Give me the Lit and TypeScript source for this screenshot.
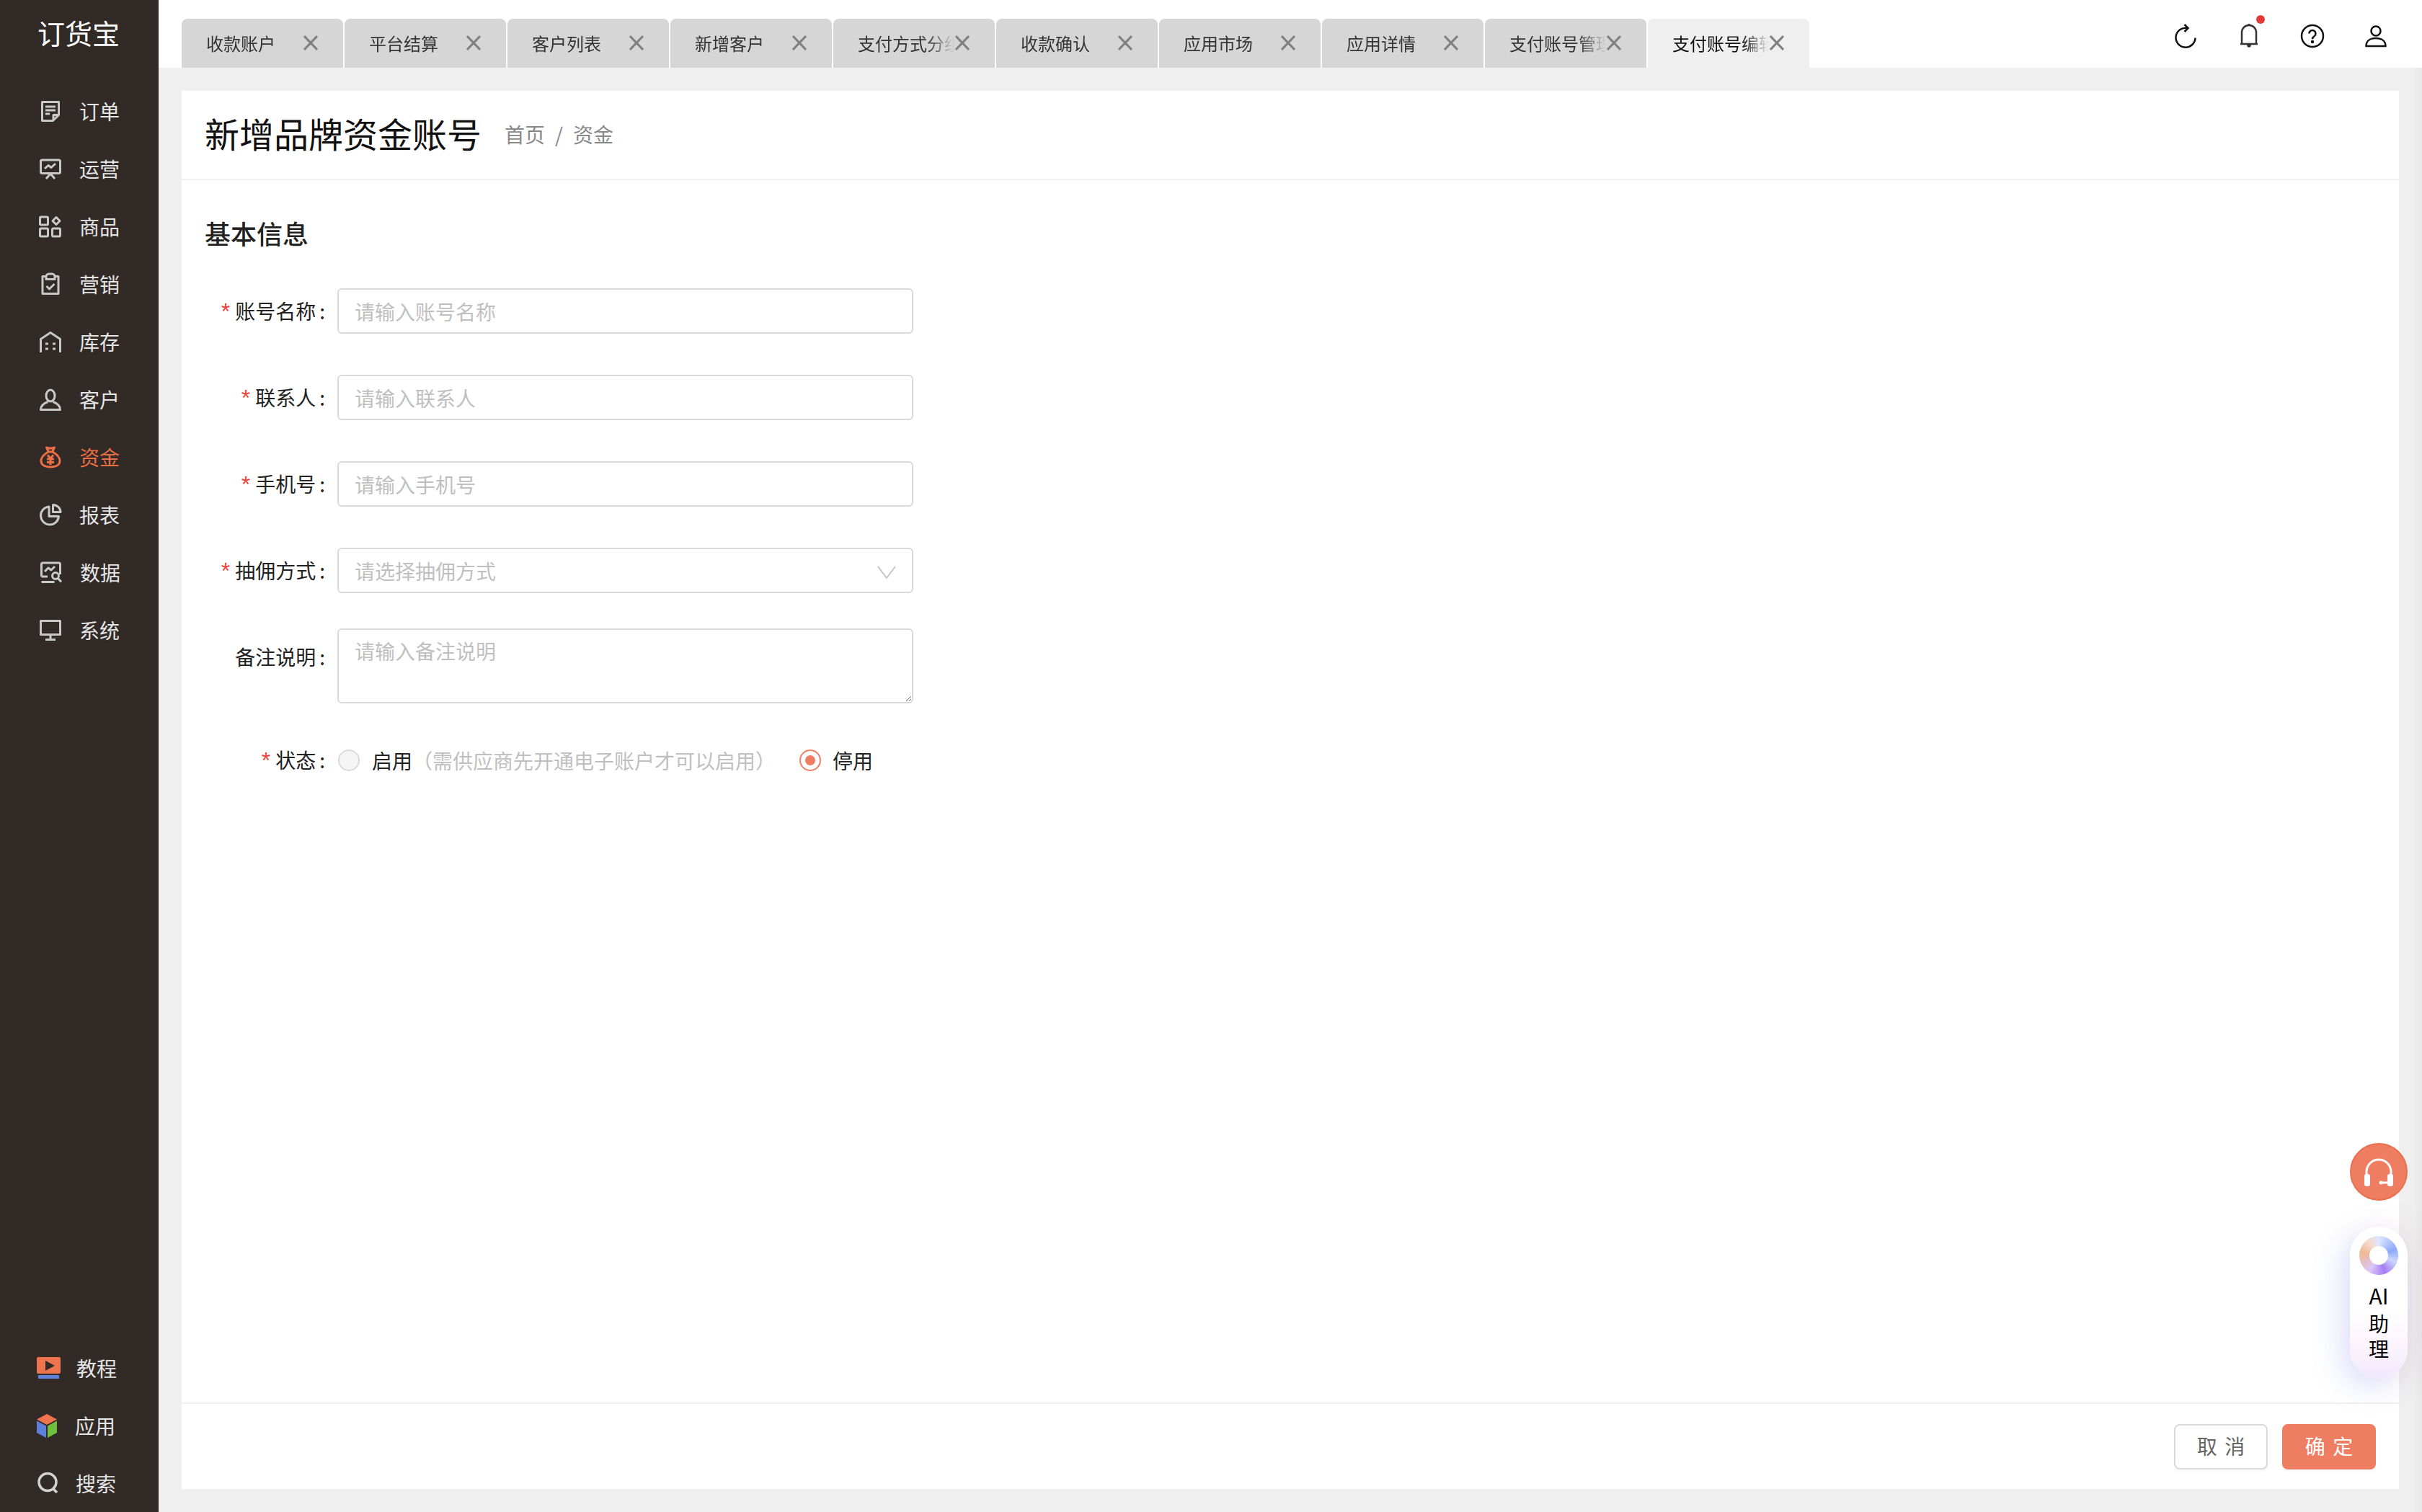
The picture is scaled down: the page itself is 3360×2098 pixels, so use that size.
import { LitElement, html, css, svg } from "lit";
import { customElement } from "lit/decorators.js";

const icons: Record<string, unknown> = {
  order: svg`<path d="M4.5 3.5h23v18l-8 8h-15z"/><path d="M27 21.5h-7v7"/><path d="M9 10h14M9 15h14M9 20h6"/>`,
  ops: svg`<rect x="2.5" y="4" width="27" height="18.5" rx="2"/><path d="M8 16l5-4.5 4 3 6-5.5"/><path d="M10 30l6-7 6 7"/>`,
  goods: svg`<rect x="1.5" y="3" width="11" height="11" rx="1.5"/><rect x="1.5" y="19" width="11" height="11" rx="1.5"/><rect x="18.5" y="19" width="11" height="11" rx="1.5"/><path d="M24 3.5l5 5-5 5-5-5z"/>`,
  market: svg`<path d="M10 5.5H5v24h22v-24h-5"/><path d="M10 9.5V6a4 4 0 0 1 4-4h4a4 4 0 0 1 4 4v3.5z"/><path d="M10.5 19l4 4 7-7"/>`,
  stock: svg`<path d="M2.5 31V12.5L16 3.5l13.5 9V31"/><path d="M9 19h4M19 19h4M9 26h4M19 26h4"/>`,
  customer: svg`<ellipse cx="16" cy="11" rx="6" ry="8"/><path d="M12.5 19.5C7 21.5 2.5 24 2.5 30.5h27c0-6.5-4.5-9-10-11"/>`,
  money: svg`<path d="M10.5 3c3 1 8 1 11 0l-3 6h-5z"/><path d="M13 9C7 12.5 3 17 3 21.5 3 27 8 30 16 30s13-3 13-8.5C29 17 25 12.5 19 9"/><path d="M12 13.5l4 4.5 4-4.5M11 19h10M11 23.5h10M16 18v9"/>`,
  report: svg`<path d="M14 5a12.5 12.5 0 1 0 13.5 13.5H14z"/><path d="M19.5 2.5V12.5h10.5C30 7 25 2.5 19.5 2.5z"/>`,
  data: svg`<path d="M3.5 22V5q0-2 2-2h22q2 0 2 2v14"/><path d="M3.5 22H12M3.5 29.5h18"/><path d="M8 15l5-5 4 3 5-5"/><circle cx="23" cy="21" r="4.5"/><path d="M26.5 24.5l4.5 5"/>`,
  system: svg`<rect x="2.5" y="3.5" width="27" height="19"/><path d="M16 23v6M9 29.5h14"/>`,
};

type NavItem = { label: string; icon: string; text: number; active?: boolean };

const NAV: NavItem[] = [
  { label: "订单", icon: "order", text: 110 },
  { label: "运营", icon: "ops", text: 110 },
  { label: "商品", icon: "goods", text: 110 },
  { label: "营销", icon: "market", text: 110 },
  { label: "库存", icon: "stock", text: 110 },
  { label: "客户", icon: "customer", text: 110 },
  { label: "资金", icon: "money", text: 110, active: true },
  { label: "报表", icon: "report", text: 110 },
  { label: "数据", icon: "data", text: 111 },
  { label: "系统", icon: "system", text: 110 },
];

const TABS = [
  "收款账户",
  "平台结算",
  "客户列表",
  "新增客户",
  "支付方式分组",
  "收款确认",
  "应用市场",
  "应用详情",
  "支付账号管理",
  "支付账号编辑",
];

@customElement("app-root")
export class AppRoot extends LitElement {
  static styles = css`
    :host {
      display: flex;
      height: 100vh;
      width: 100%;
      position: relative;
      overflow: hidden;
      background: #efefef;
      color: #222;
      font-family: "Noto Sans CJK SC", "Noto Sans", sans-serif;
      font-size: 28px;
    }
    .side {
      width: 220px;
      flex: none;
      background: #312a26;
      display: flex;
      flex-direction: column;
      color: #e6e6e6;
    }
    .logo {
      height: 114px;
      flex: none;
      padding: 20px 0 0 52px;
      box-sizing: border-box;
      font-size: 38px;
      line-height: 50px;
      color: #fff;
    }
    .nav-item {
      height: 80px;
      display: flex;
      align-items: center;
      line-height: 40px;
    }
    .nav-item.active {
      color: #ec6f45;
    }
    .nav-icon {
      width: 32px;
      height: 32px;
      flex: none;
      fill: none;
      stroke: #c9c9c9;
      stroke-width: 3;
      stroke-linejoin: round;
    }
    .active .nav-icon {
      stroke: #ec6f45;
    }
    .bottom {
      margin-top: auto;
    }
    .main {
      flex: 1;
      min-width: 0;
      display: flex;
      flex-direction: column;
    }
    .top {
      height: 94px;
      flex: none;
      background: #fff;
      display: flex;
      align-items: flex-end;
      padding: 0 44px 0 32px;
    }
    .tabs {
      display: flex;
      gap: 2px;
    }
    .tab {
      width: 224px;
      height: 68px;
      box-sizing: border-box;
      background: #d6d6d6;
      border-radius: 8px 8px 0 0;
      padding: 0 0 0 34px;
      display: flex;
      align-items: center;
      font-size: 24px;
      color: #333;
    }
    .tab.current {
      background: #efefef;
      color: #111;
    }
    .tab-text {
      width: 146px;
      white-space: nowrap;
      overflow: hidden;
      padding-bottom: 2px;
      -webkit-mask-image: linear-gradient(to right, #000 96px, transparent 134px);
      mask-image: linear-gradient(to right, #000 96px, transparent 134px);
    }
    .tab-x {
      width: 20px;
      height: 21px;
      margin-left: -11px;
      margin-bottom: 2px;
      flex: none;
      stroke: #808080;
      stroke-width: 3;
      fill: none;
    }
    .tools {
      margin-left: auto;
      align-self: flex-start;
      padding-top: 30px;
      display: flex;
      gap: 48px;
    }
    .tool {
      width: 40px;
      height: 40px;
      position: relative;
    }
    .tool svg {
      display: block;
      width: 40px;
      height: 40px;
      fill: none;
      stroke: #111;
      stroke-width: 2.5;
    }
    .tool .bell {
      stroke: #333;
    }
    .dot {
      position: absolute;
      top: -9px;
      right: -2px;
      width: 12px;
      height: 12px;
      border-radius: 50%;
      background: #e23c39;
    }
    .content {
      flex: 1;
      min-height: 0;
      padding: 32px;
      display: flex;
    }
    .card {
      flex: 1;
      background: #fff;
      display: flex;
      flex-direction: column;
    }
    .head {
      height: 124px;
      flex: none;
      box-sizing: border-box;
      border-bottom: 2px solid #f0f0f0;
      padding: 0 32px 6px;
      display: flex;
      align-items: center;
      gap: 32px;
    }
    .head h1 {
      margin: 0;
      font-size: 48px;
      font-weight: 400;
      color: #111;
      line-height: 60px;
    }
    .crumb {
      display: flex;
      gap: 14px;
      color: #888;
      padding-top: 4px;
    }
    .body {
      flex: 1;
      padding: 48px 32px 0;
    }
    h2 {
      margin: 0 0 52px;
      font-size: 36px;
      font-weight: 500;
      line-height: 50px;
      color: #222;
    }
    .row {
      display: flex;
      margin-bottom: 57px;
    }
    .row.tight {
      margin-bottom: 49px;
    }
    .row.textarea {
      margin-bottom: 47px;
    }
    .label {
      width: 167px;
      flex: none;
      margin-right: 17px;
      height: 63px;
      line-height: 63px;
      text-align: right;
      white-space: nowrap;
      color: #222;
    }
    .label.low {
      height: 79px;
      line-height: 79px;
    }
    .star {
      color: #e8453c;
      margin-right: 7px;
      font-size: 32px;
      line-height: 1;
      font-family: "Liberation Sans", sans-serif;
    }
    .colon {
      margin-left: 5px;
    }
    .field {
      width: 799px;
      height: 63px;
      box-sizing: border-box;
      border: 2px solid #d9d9d9;
      border-radius: 6px;
      padding: 0 22px;
      font: inherit;
      color: #222;
      background: #fff;
      outline: none;
      display: block;
    }
    .field::placeholder {
      color: #bfbfbf;
      opacity: 1;
    }
    textarea.field {
      height: 104px;
      padding: 10px 22px;
      line-height: 39px;
      resize: vertical;
    }
    .select {
      display: flex;
      align-items: center;
      justify-content: space-between;
      color: #bfbfbf;
      padding-right: 22px;
    }
    .select svg {
      width: 26px;
      height: 18px;
      fill: none;
      stroke: #c4c4c4;
      stroke-width: 2;
      margin-top: 4px;
    }
    .radios {
      display: flex;
      align-items: center;
      height: 63px;
    }
    .radio {
      width: 30px;
      height: 30px;
      box-sizing: border-box;
      border-radius: 50%;
      border: 2px solid #d9d9d9;
      background: #f5f5f5;
      margin: 0 17px 0 1px;
      display: flex;
      align-items: center;
      justify-content: center;
      flex: none;
    }
    .radio.on {
      border-color: #ef7d62;
      background: #fff;
      margin: 0 16px 0 33px;
    }
    .radio.on::after {
      content: "";
      width: 14px;
      height: 14px;
      border-radius: 50%;
      background: #ef7d62;
    }
    .hint {
      color: #bfbfbf;
    }
    .foot {
      height: 120px;
      flex: none;
      box-sizing: border-box;
      border-top: 2px solid #f0f0f0;
      padding: 0 32px;
      display: flex;
      justify-content: flex-end;
      align-items: center;
      gap: 20px;
    }
    .btn {
      width: 130px;
      height: 63px;
      box-sizing: border-box;
      border-radius: 8px;
      border: 2px solid #d9d9d9;
      background: #fff;
      color: #666;
      font: inherit;
      word-spacing: 4px;
      box-shadow: 0 4px 0 rgba(0, 0, 0, 0.02);
      padding: 0 0 2px;
    }
    .btn.primary {
      background: #ef7d62;
      border-color: #ef7d62;
      color: #fff;
    }
    .help {
      position: absolute;
      left: 3260px;
      top: 1586px;
      width: 80px;
      height: 80px;
      box-sizing: border-box;
      border-radius: 50%;
      background: #ef7d62;
      border: 2px solid #e7704f;
      display: flex;
      align-items: center;
      justify-content: center;
    }
    .help svg {
      width: 44px;
      height: 44px;
      margin-top: 1px;
    }
    .edge {
      position: absolute;
      top: 94px;
      right: 0;
      bottom: 0;
      width: 12px;
      background: linear-gradient(to right, rgba(0, 0, 0, 0), rgba(0, 0, 0, 0.035));
    }
    .ai {
      position: absolute;
      left: 3260px;
      top: 1702px;
      width: 80px;
      height: 211px;
      border-radius: 40px;
      background: linear-gradient(180deg, #fff 0%, #fff 55%, #fbf3fb 80%, #f0e8fd 100%);
      box-shadow: -12px 12px 40px rgba(110, 130, 250, 0.22), 10px 0 40px rgba(230, 170, 170, 0.18);
      display: flex;
      flex-direction: column;
      align-items: center;
      color: #000;
      line-height: 35px;
    }
    .ai-name {
      font-size: 30px;
      line-height: 40px;
      margin-bottom: 2px;
    }
    .swirl {
      width: 54px;
      height: 54px;
      margin: 13px 0 8px;
      border-radius: 50%;
      background: conic-gradient(#dfe6ff 0deg, #8ea9fb 70deg, #c9d6ff 110deg, #a67cf3 160deg, #dcc7fa 210deg, #efb796 280deg, #f6d9c8 320deg, #dfe6ff 360deg);
      display: flex;
      align-items: center;
      justify-content: center;
    }
    .swirl::after {
      content: "";
      width: 26px;
      height: 26px;
      border-radius: 50%;
      background: #fff;
    }
  `;

  render() {
    return html`
      <aside class="side">
        <div class="logo">订货宝</div>
        ${NAV.map((n) => this.renderNav(n))}
        <div class="bottom">
          <div class="nav-item" style="padding-left:51px">
            <svg width="34" height="32" viewBox="0 0 34 32">
              <rect x="0" y="1" width="33" height="23" rx="2" fill="#ef7550" />
              <path d="M12 6l13 7-13 7z" fill="#312a26" />
              <rect x="2" y="26" width="29" height="5" fill="#5f80dc" />
            </svg>
            <span style="margin-left:21px">教程</span>
          </div>
          <div class="nav-item" style="padding-left:51px">
            <svg width="29" height="33" viewBox="0 0 29 33">
              <path d="M14 0l14 7.5-14 7.5L0 7.5z" fill="#ef7550" />
              <path d="M0 9.5l13 7V33l-13-7z" fill="#5f80dc" />
              <path d="M28 9.5l-13 7V33l13-7z" fill="#6fc03c" />
            </svg>
            <span style="margin-left:24px">应用</span>
          </div>
          <div class="nav-item" style="padding-left:52px">
            <svg width="30" height="30" viewBox="0 0 30 30" fill="none" stroke="#d2d2d2" stroke-width="3.5">
              <circle cx="14" cy="13.5" r="12" />
              <path d="M22 23l5 5" />
            </svg>
            <span style="margin-left:23px">搜索</span>
          </div>
        </div>
      </aside>
      <div class="main">
        <header class="top">
          <div class="tabs">
            ${TABS.map(
              (t, i) => html`
                <div class="tab ${i === TABS.length - 1 ? "current" : ""}">
                  <span class="tab-text">${t}</span>
                  <svg class="tab-x" viewBox="0 0 20 21"><path d="M1 1l18 19M19 1L1 20" /></svg>
                </div>
              `
            )}
          </div>
          <div class="tools">
            <div class="tool">
              <svg viewBox="0 0 40 40"><path d="M23 9A13.5 13.5 0 1 0 33.5 22.5" /><path d="M18.5 4l5 5-5 5" /></svg>
            </div>
            <div class="tool">
              <svg class="bell" viewBox="0 0 40 40">
                <path d="M10 31V15a10 10 0 0 1 20 0v16" />
                <path d="M8 31h24" />
                <path d="M20 3v2" />
                <circle cx="20" cy="33" r="1.5" fill="#333" />
              </svg>
              <span class="dot"></span>
            </div>
            <div class="tool">
              <svg viewBox="0 0 40 40">
                <circle cx="20" cy="20" r="15" />
                <path d="M15.5 16.5a4.5 4.5 0 1 1 7 3.8c-1.8 1.2-2.5 2-2.5 4" />
                <circle cx="20" cy="28" r="1" fill="#111" />
              </svg>
            </div>
            <div class="tool">
              <svg viewBox="0 0 40 40">
                <circle cx="20" cy="13" r="6.5" />
                <path d="M6.5 34c0-7.5 6-11 13.5-11s13.5 3.5 13.500 11z" />
              </svg>
            </div>
          </div>
        </header>
        <div class="content">
          <section class="card">
            <div class="head">
              <h1>新增品牌资金账号</h1>
              <div class="crumb"><span>首页</span><span>/</span><span>资金</span></div>
            </div>
            <div class="body">
              <h2>基本信息</h2>
              <div class="row">
                <div class="label"><span class="star">*</span>账号名称<span class="colon">:</span></div>
                <input class="field" placeholder="请输入账号名称" />
              </div>
              <div class="row">
                <div class="label"><span class="star">*</span>联系人<span class="colon">:</span></div>
                <input class="field" placeholder="请输入联系人" />
              </div>
              <div class="row">
                <div class="label"><span class="star">*</span>手机号<span class="colon">:</span></div>
                <input class="field" placeholder="请输入手机号" />
              </div>
              <div class="row tight">
                <div class="label"><span class="star">*</span>抽佣方式<span class="colon">:</span></div>
                <div class="field select">
                  <span>请选择抽佣方式</span>
                  <svg viewBox="0 0 26 18"><path d="M1 1l12 16L25 1" /></svg>
                </div>
              </div>
              <div class="row textarea">
                <div class="label low">备注说明<span class="colon">:</span></div>
                <textarea class="field" placeholder="请输入备注说明"></textarea>
              </div>
              <div class="row">
                <div class="label"><span class="star">*</span>状态<span class="colon">:</span></div>
                <div class="radios">
                  <span class="radio"></span>
                  <span>启用</span>
                  <span class="hint">（需供应商先开通电子账户才可以启用）</span>
                  <span class="radio on"></span>
                  <span>停用</span>
                </div>
              </div>
            </div>
            <div class="foot">
              <button class="btn">取 消</button>
              <button class="btn primary">确 定</button>
            </div>
          </section>
        </div>
      </div>
      <div class="edge"></div>
      <div class="help">
        <svg viewBox="0 0 44 44" fill="none" stroke="#fff" stroke-width="3">
          <path d="M5 28v-7a17 17 0 0 1 34 0v7" />
          <rect x="2" y="24" width="8" height="17" rx="3" fill="#fff" stroke="none" />
          <rect x="34" y="24" width="8" height="17" rx="3" fill="#fff" stroke="none" />
          <path d="M26 36h10" />
          <circle cx="25" cy="36" r="2.5" fill="#fff" stroke="none" />
        </svg>
      </div>
      <div class="ai">
        <div class="swirl"></div>
        <span class="ai-name">AI</span>
        <span>助</span>
        <span>理</span>
      </div>
    `;
  }

  renderNav(n: NavItem) {
    return html`
      <div class="nav-item ${n.active ? "active" : ""}" style="padding-left:54px">
        <svg class="nav-icon" viewBox="0 0 32 32">${icons[n.icon]}</svg>
        <span style="margin-left:${n.text - 86}px">${n.label}</span>
      </div>
    `;
  }
}
